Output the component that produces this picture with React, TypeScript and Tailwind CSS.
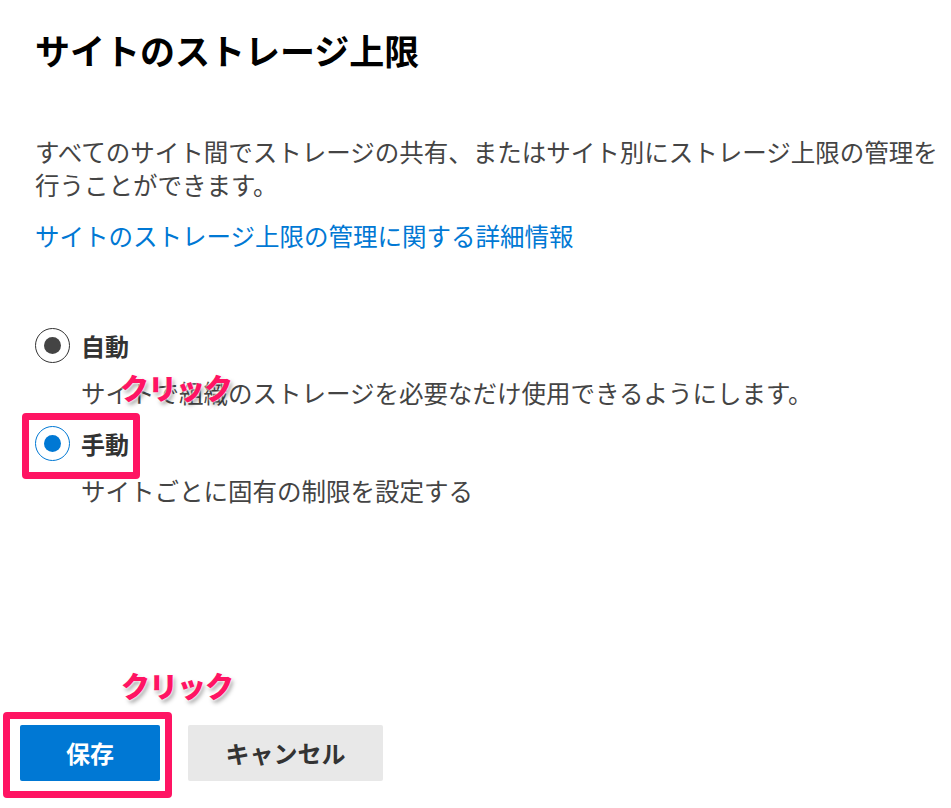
import { useState } from 'react';

const font = { fontFamily: '"Noto Sans CJK JP", "Noto Sans", sans-serif' };

function Radio({ checked, label, desc, onSelect }: { checked: boolean; label: string; desc: string; onSelect: () => void }) {
  return (
    <div>
      <button type="button" onClick={onSelect} className="flex items-center gap-[11px]">
        <span
          className={`flex h-[35px] w-[35px] items-center justify-center rounded-full border ${
            checked ? 'border-[#0078d4]' : 'border-[#333333]'
          }`}
        >
          <span className={`h-[17px] w-[17px] rounded-full ${checked ? 'bg-[#0078d4]' : 'bg-[#444444]'}`} />
        </span>
        <span className="text-[24px] font-bold leading-[35px] text-[#333333]">{label}</span>
      </button>
      <p className="ml-[46px] mt-[13px] text-[24.5px] leading-[33px] text-[#444444]">{desc}</p>
    </div>
  );
}

function Callout({ className }: { className: string }) {
  return (
    <span
      className={`pointer-events-none absolute text-[29px] font-black leading-none tracking-[-1px] text-[#ff1463] [text-shadow:0_0_2px_#fff,0_0_3px_#fff,2px_3px_4px_rgba(0,0,0,0.35)] ${className}`}
    >
      クリック
    </span>
  );
}

export default function App() {
  const [mode, setMode] = useState<'auto' | 'manual'>('manual');

  return (
    <div className="relative min-h-[808px] w-[951px] bg-white" style={font}>
      <div className="pl-[35px] pr-[4px] pt-[30px]">
        <h1 className="text-[35px] font-bold leading-[40px] text-black">サイトのストレージ上限</h1>
        <p className="mt-[65px] text-[24.5px] leading-[33px] text-[#444444]">
          すべてのサイト間でストレージの共有、またはサイト別にストレージ上限の管理を行うことができます。
        </p>
        <a href="#" className="mt-[18px] block text-[24.5px] leading-[33px] text-[#0078d4]">
          サイトのストレージ上限の管理に関する詳細情報
        </a>

        <div className="mt-[76px] flex flex-col gap-[17px]">
          <Radio
            checked={mode === 'auto'}
            label="自動"
            desc="サイトで組織のストレージを必要なだけ使用できるようにします。"
            onSelect={() => setMode('auto')}
          />
          <Radio
            checked={mode === 'manual'}
            label="手動"
            desc="サイトごとに固有の制限を設定する"
            onSelect={() => setMode('manual')}
          />
        </div>
      </div>

      <div className="ml-[20px] mt-[218px] flex gap-[28px]">
        <button type="button" className="h-[56px] w-[140px] rounded-[2px] bg-[#0078d4] text-[24px] font-bold text-white">
          保存
        </button>
        <button type="button" className="h-[56px] w-[195px] rounded-[2px] bg-[#e8e8e8] text-[24px] font-bold text-[#333333]">
          キャンセル
        </button>
      </div>

      {/* annotations */}
      <span className="pointer-events-none absolute left-[22px] top-[413px] h-[66px] w-[118px] rounded-[4px] border-[7px] border-[#ff1463]" />
      <span className="pointer-events-none absolute left-[3px] top-[712px] h-[86px] w-[169px] rounded-[4px] border-[7px] border-[#ff1463]" />
      <Callout className="left-[120px] top-[373px]" />
      <Callout className="left-[121px] top-[671px]" />
    </div>
  );
}
